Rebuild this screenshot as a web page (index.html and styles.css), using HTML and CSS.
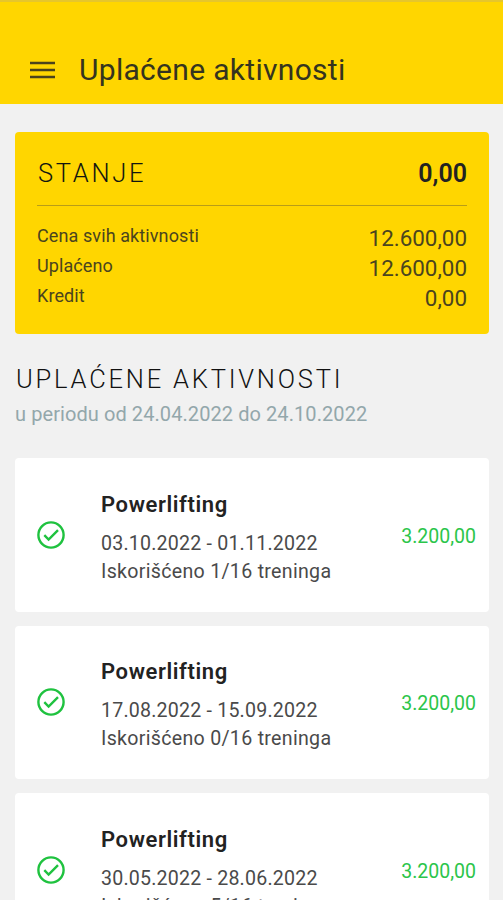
FILE: index.html
```html
<!DOCTYPE html>
<html lang="sr-Latn">
<head>
	<meta charset="UTF-8">
	<meta name="viewport" content="width=device-width, initial-scale=1.0">
	<title>Uplaćene aktivnosti</title>
	<link rel="stylesheet" href="styles.css">
</head>
<body>
	<header class="top-bar">
		<svg class="menu-icon" viewBox="0 0 26 20">
			<path d="M1 3h25M1 10h25M1 17h25" />
		</svg>
		<h1 class="title">Uplaćene aktivnosti</h1>
	</header>

	<main class="content">
		<section class="balance">
			<div class="balance-head">
				<h2 class="balance-title">STANJE</h2>
				<span class="balance-total">0,00</span>
			</div>
			<div class="balance-row">
				<span class="label">Cena svih aktivnosti</span>
				<span class="value">12.600,00</span>
			</div>
			<div class="balance-row">
				<span class="label">Uplaćeno</span>
				<span class="value">12.600,00</span>
			</div>
			<div class="balance-row">
				<span class="label">Kredit</span>
				<span class="value">0,00</span>
			</div>
		</section>

		<h2 class="section-title">UPLAĆENE AKTIVNOSTI</h2>
		<p class="period">u periodu od 24.04.2022 do 24.10.2022</p>

		<div class="activities">
			<div class="activity">
				<svg class="check-icon" viewBox="0 0 28 28">
					<circle cx="14" cy="14" r="12.6" />
					<path d="M7.3 14.2l4.3 4.3 9.4-9.4" />
				</svg>
				<div class="details">
					<h3 class="name">Powerlifting</h3>
					<p class="line dates">03.10.2022 - 01.11.2022</p>
					<p class="line">Iskorišćeno 1/16 treninga</p>
				</div>
				<span class="price">3.200,00</span>
			</div>
			<div class="activity">
				<svg class="check-icon" viewBox="0 0 28 28">
					<circle cx="14" cy="14" r="12.6" />
					<path d="M7.3 14.2l4.3 4.3 9.4-9.4" />
				</svg>
				<div class="details">
					<h3 class="name">Powerlifting</h3>
					<p class="line dates">17.08.2022 - 15.09.2022</p>
					<p class="line">Iskorišćeno 0/16 treninga</p>
				</div>
				<span class="price">3.200,00</span>
			</div>
			<div class="activity">
				<svg class="check-icon" viewBox="0 0 28 28">
					<circle cx="14" cy="14" r="12.6" />
					<path d="M7.3 14.2l4.3 4.3 9.4-9.4" />
				</svg>
				<div class="details">
					<h3 class="name">Powerlifting</h3>
					<p class="line dates">30.05.2022 - 28.06.2022</p>
					<p class="line">Iskorišćeno 5/16 treninga</p>
				</div>
				<span class="price">3.200,00</span>
			</div>
		</div>
	</main>
</body>
</html>
```

FILE: styles.css
```css
* {
	box-sizing: border-box;
	margin: 0;
	padding: 0;
}

body {
	height: 900px;
	overflow: hidden;
	background-color: #f1f1f1;
	color: #222;
	font-family: Roboto, "Liberation Sans", sans-serif;
}

.top-bar {
	display: flex;
	align-items: center;
	height: 104px;
	padding: 33px 29px 0;
	border-top: 2px solid #e6c62c;
	background-color: #ffd600;
}

.menu-icon {
	width: 26px;
	height: 20px;
	margin-right: 24px;
	fill: none;
	stroke: #4b431c;
	stroke-width: 2.4;
}

.title {
	color: #35341f;
	font-size: 30px;
	font-weight: 400;
	letter-spacing: 0.3px;
	white-space: nowrap;
}

.content {
	padding: 28px 14px 0 15px;
}

.balance {
	height: 202px;
	padding: 0 22px;
	border-radius: 4px;
	background-color: #ffd600;
}

.balance-head {
	display: flex;
	align-items: center;
	justify-content: space-between;
	height: 74px;
	margin-bottom: 16px;
	padding-top: 8px;
	border-bottom: 1px solid #b89d18;
}

.balance-title {
	padding-left: 1px;
	color: #111510;
	font-size: 25.5px;
	font-weight: 300;
	letter-spacing: 2.7px;
}

.balance-total {
	padding-top: 1px;
	font-size: 25px;
	font-weight: 600;
}

.balance-row {
	display: flex;
	justify-content: space-between;
	height: 30px;
	color: #4a441f;
}

.label {
	font-size: 18px;
	line-height: 28px;
	letter-spacing: 0.1px;
}

.value {
	font-size: 22.4px;
	line-height: 33px;
}

.section-title {
	margin-top: 29px;
	padding-left: 1px;
	color: #111;
	font-size: 25.5px;
	font-weight: 300;
	line-height: 32px;
	letter-spacing: 2.8px;
}

.period {
	margin-top: 7px;
	color: #93a7ab;
	font-size: 20px;
	line-height: 24px;
	letter-spacing: 0.08px;
}

.activities {
	display: grid;
	gap: 14px;
	margin-top: 32px;
}

.activity {
	display: flex;
	align-items: center;
	height: 153.6px;
	padding: 0 13px 0 22px;
	border-radius: 4px;
	background-color: #fff;
}

.check-icon {
	width: 28px;
	height: 28px;
	margin-right: 36px;
	fill: none;
	stroke: #1fc23f;
	stroke-width: 2.4;
}

.details {
	flex: 1;
	padding-top: 7px;
}

.name {
	margin-bottom: 11px;
	font-size: 22px;
	font-weight: 600;
	line-height: 28px;
	letter-spacing: 0.6px;
}

.line {
	color: #4a4a4a;
	font-size: 19.6px;
	line-height: 28px;
	letter-spacing: 0.3px;
	white-space: nowrap;
}

.dates {
	letter-spacing: 0.2px;
}

.price {
	padding-top: 3px;
	color: #2bc54a;
	font-size: 19.5px;
}
```
